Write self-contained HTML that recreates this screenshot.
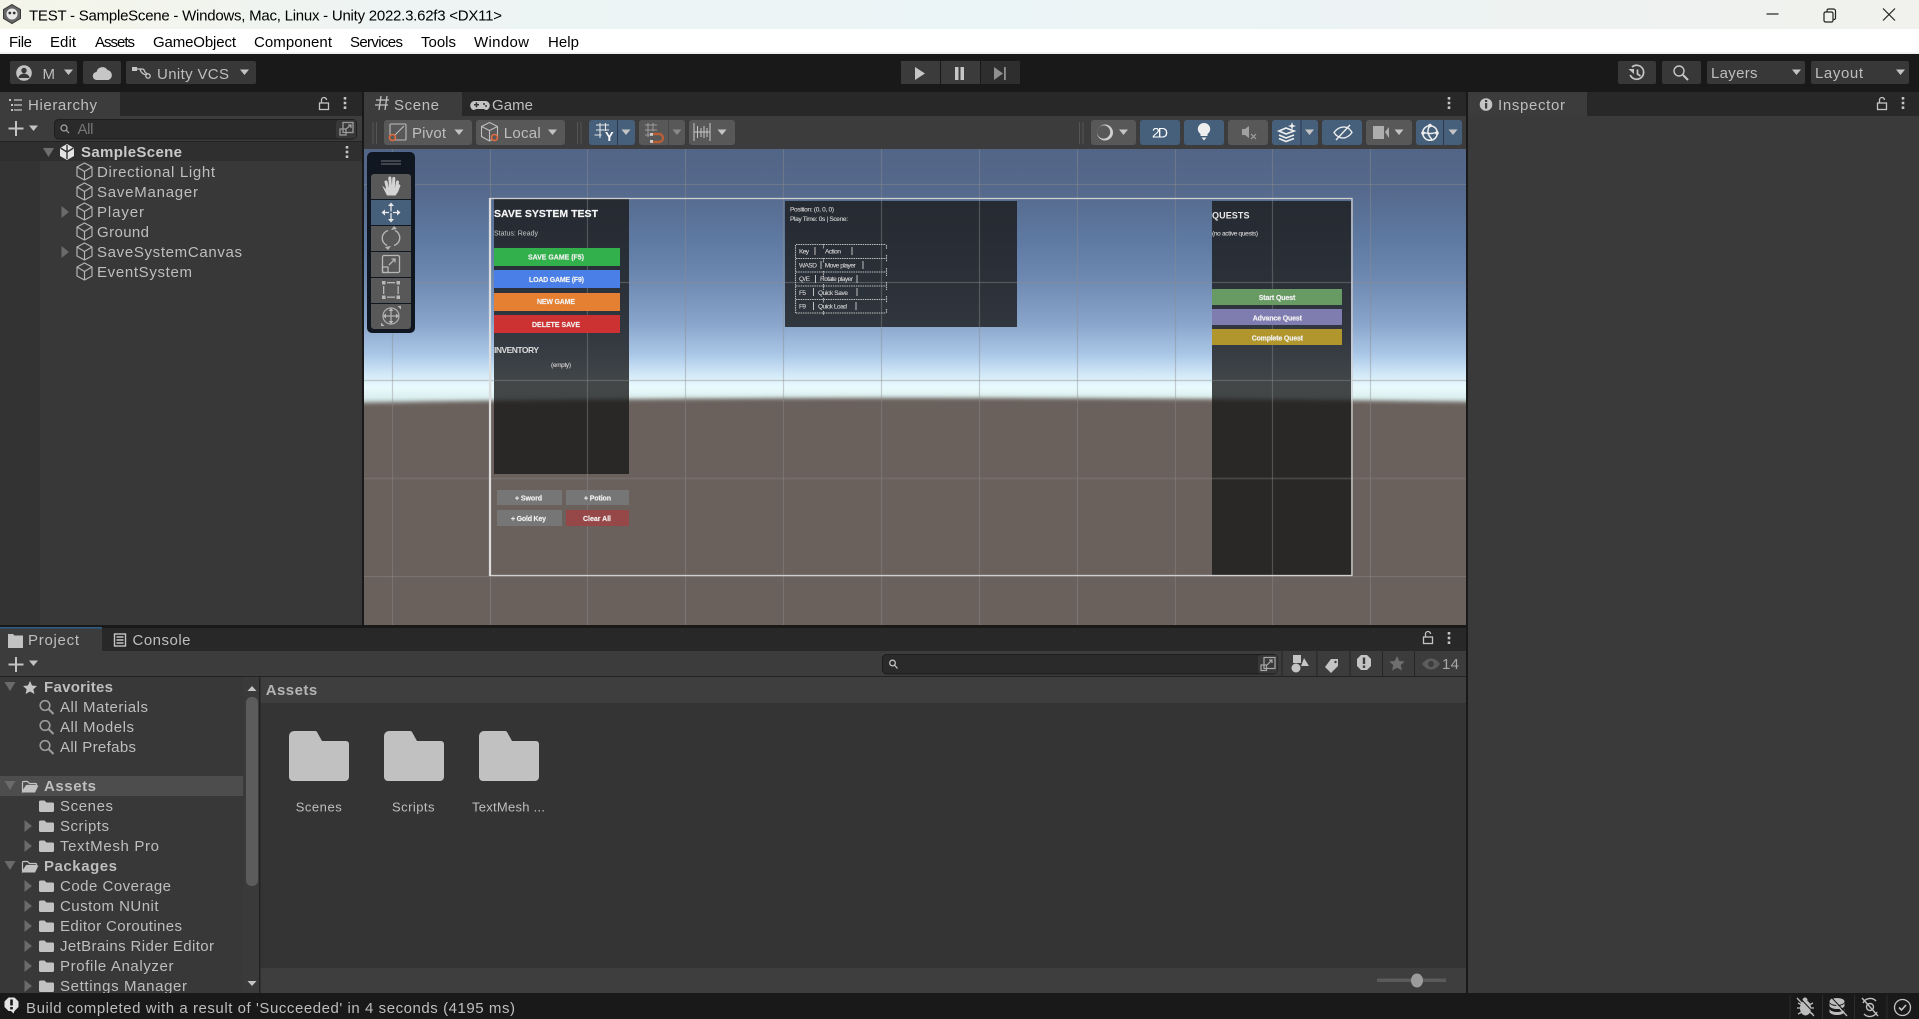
<!DOCTYPE html>
<html lang="en"><head><meta charset="utf-8"><title>TEST - SampleScene - Unity</title>
<style>
html,body{margin:0;padding:0;background:#191919;overflow:hidden;width:1919px;height:1019px}
svg{display:block}
text{font-family:"Liberation Sans",sans-serif;font-size:15px;white-space:pre}
text:not([fill]){fill:#bebebe}
text.b{font-weight:bold}
text.k{fill:#000}
text.u{fill:#fff}
text.c{fill:#f2f2f2;font-weight:bold;font-size:7px;stroke:#f2f2f2;stroke-width:.15px}
text.s{fill:#d4d4d4;font-size:6.500px;stroke:#d4d4d4;stroke-width:.1px}
</style></head><body>
<svg width="1919" height="1019" viewBox="0 0 1919 1019" xmlns="http://www.w3.org/2000/svg">
<defs>
<linearGradient id="tb" x1="0" x2="1" y1="0" y2="0"><stop offset="0" stop-color="#f5f5e9"/><stop offset=".2" stop-color="#eef4f3"/><stop offset=".5" stop-color="#ebf4f7"/><stop offset=".75" stop-color="#edf3f3"/><stop offset="1" stop-color="#f1f2ed"/></linearGradient>
<linearGradient id="sky" gradientUnits="userSpaceOnUse" x1="0" x2="0" y1="149" y2="405"><stop offset="0" stop-color="#526587"/><stop offset=".16" stop-color="#55698c"/><stop offset=".36" stop-color="#5f7aa2"/><stop offset=".5" stop-color="#6d88b0"/><stop offset=".68" stop-color="#89a4ca"/><stop offset=".8" stop-color="#aac6e6"/><stop offset=".87" stop-color="#cde4f6"/><stop offset=".93" stop-color="#eafbfd"/><stop offset=".97" stop-color="#dcefef"/><stop offset="1" stop-color="#b8c6c6"/></linearGradient>
<filter id="bl" x="-5%" y="-5%" width="110%" height="110%"><feGaussianBlur stdDeviation="2"/></filter>
<filter id="tx" x="-5%" y="-5%" width="110%" height="110%"><feGaussianBlur stdDeviation=".3"/></filter>
<clipPath id="pc"><rect x="0" y="677" width="243" height="316"/></clipPath>
<clipPath id="sc"><rect x="364" y="149" width="1102" height="476"/></clipPath>
<g id="dn"><path d="M-4.500-2.500h9L0 3z"/></g>
<g id="rt"><path d="M-3.500-6L4 0l-7.500 6z" fill="#6a6a6a"/></g>
<g id="tdn"><path d="M-5.500-5h11L0 4z" fill="#6a6a6a"/></g>
<g id="cube" fill="none" stroke="#b4b4b4" stroke-width="1.200" stroke-linejoin="round"><path d="M0-8.500L7.500-4.500v9L0 8.500l-7.500-4v-9z"/><path d="M-7.500-4.500L0 0l7.500-4.500M0 0v8.500"/></g>
<path id="fo" d="M0 2a1.500 1.500 0 0 1 1.500-1.500h4l2 2H13.500a1.500 1.500 0 0 1 1.500 1.500v6.500a1.500 1.500 0 0 1-1.500 1.500H1.500a1.500 1.500 0 0 1-1.500-1.500z" fill="#c2c2c2"/>
<g id="fopen"><path d="M0 2a1 1 0 0 1 1-1h4l2 2h6a1 1 0 0 1 1 1v1H4L0 11z" fill="none" stroke="#c2c2c2" stroke-width="1.200"/><path d="M3.500 5H16L12.500 12H0z" fill="#c2c2c2"/></g>
<path id="bf" d="M0 5a5 5 0 0 1 5-5h21a2 2 0 0 1 2 1l5 9h24a3 3 0 0 1 3 3v33a4 4 0 0 1-4 4H4a4 4 0 0 1-4-4z" fill="#c1c1c1"/>
<g id="mag" fill="none" stroke="#9b9b9b" stroke-width="1.600"><circle cx="5.500" cy="5.500" r="4.800"/><path d="M9 9l5 5" stroke-width="2"/></g>
<g id="lock" fill="none" stroke="#c4c4c4" stroke-width="1.300"><rect x="-4.500" y="-1" width="9" height="6.500"/><path d="M-2.500-1v-3a2.500 2.500 0 0 1 5 0"/></g>
<g id="dots" fill="#c4c4c4"><rect x="-1.300" y="-6" width="2.600" height="2.600"/><rect x="-1.300" y="-1.300" width="2.600" height="2.600"/><rect x="-1.300" y="3.400" width="2.600" height="2.600"/></g>
</defs>

<!-- title bar -->
<rect width="1919" height="29" fill="url(#tb)"/>
<rect y="29" width="1919" height="25" fill="#fff"/>
<rect y="52.500" width="1919" height="1.500" fill="#eee"/>
<path d="M12 4.500l8.500 5v9L12 23.500l-8.500-5v-9z" fill="#666" stroke="#3a3a3a"/><circle cx="12" cy="14" r="5.500" fill="#e8e8e8"/><circle cx="9.800" cy="13" r="1.400" fill="#333"/><circle cx="14.200" cy="13" r="1.400" fill="#333"/>
<text x="29" y="20.500" class="k" textLength="473">TEST - SampleScene - Windows, Mac, Linux - Unity 2022.3.62f3 &lt;DX11&gt;</text>
<g stroke="#222" stroke-width="1.200" fill="none"><path d="M1766.500 14h12"/><rect x="1824" y="12" width="9" height="10" rx="1.500"/><path d="M1827 12v-1.500a1.500 1.500 0 0 1 1.500-1.500h5a2 2 0 0 1 2 2v7a1.500 1.500 0 0 1-1.500 1.500H1833"/><path d="M1883 8.500l12 12M1895 8.500l-12 12"/></g>
<text x="9" y="47" class="k" textLength="23">File</text>
<text x="50" y="47" class="k" textLength="26">Edit</text>
<text x="95" y="47" class="k" textLength="40">Assets</text>
<text x="153" y="47" class="k" textLength="83">GameObject</text>
<text x="254" y="47" class="k" textLength="78">Component</text>
<text x="350" y="47" class="k" textLength="53">Services</text>
<text x="421" y="47" class="k" textLength="35">Tools</text>
<text x="474" y="47" class="k" textLength="55">Window</text>
<text x="548" y="47" class="k" textLength="31">Help</text>

<!-- main toolbar -->
<g fill="#383838">
<rect x="10" y="61" width="67" height="23" rx="2"/><rect x="83" y="61" width="38" height="23" rx="2"/><rect x="126" y="61" width="130" height="23" rx="2"/>
<rect x="1618" y="61" width="38" height="23" rx="2"/><rect x="1662" y="61" width="39" height="23" rx="2"/><rect x="1707" y="61" width="98" height="23" rx="2"/><rect x="1811" y="61" width="98" height="23" rx="2"/>
</g>
<circle cx="24" cy="73" r="7.800" fill="#c4c4c4"/><circle cx="24" cy="70.500" r="2.700" fill="#383838"/><path d="M18.500 78a5.500 4.500 0 0 1 11 0z" fill="#383838"/>
<text x="42.500" y="79" textLength="12">M</text>
<use href="#dn" x="68.500" y="72" fill="#c4c4c4"/>
<path d="M97 80a4 4 0 0 1-.500-8 6 6 0 0 1 11-2 5.200 5.200 0 0 1 1 10z" fill="#c6c6c6"/>
<g fill="none" stroke="#c4c4c4" stroke-width="1.300"><path d="M136 69h6c2 0 2 1 3 3l2 2"/><path d="M140 69c1 4 3 5 6 6"/><circle cx="148" cy="76" r="2.200"/></g><path d="M132 67h5v4h-5z" fill="#c4c4c4"/>
<text x="157" y="79" textLength="72">Unity VCS</text>
<use href="#dn" x="244.500" y="72" fill="#c4c4c4"/>
<rect x="901" y="61" width="40" height="23" fill="#3b3b3b"/><rect x="941" y="61" width="39" height="23" fill="#3b3b3b"/><rect x="981" y="61" width="39" height="23" fill="#2e2e2e"/><rect x="940" y="61" width="1" height="23" fill="#191919"/><rect x="980" y="61" width="1" height="23" fill="#191919"/>
<path d="M915 67l10 6.500-10 6.500z" fill="#c6c6c6"/>
<rect x="955" y="67" width="3.500" height="13" fill="#c6c6c6"/><rect x="960.500" y="67" width="3.500" height="13" fill="#c6c6c6"/>
<path d="M994 67l9 6.500-9 6.500z" fill="#8f8f8f"/><rect x="1004" y="67" width="1.800" height="13" fill="#8f8f8f"/>
<g fill="none" stroke="#c6c6c6" stroke-width="1.700"><path d="M1632 67a7 7 0 1 1-1.800 8"/><path d="M1637.500 69.500v4.500l3 2"/></g><path d="M1628.500 69h5.500v5z" fill="#c6c6c6"/>
<g fill="none" stroke="#c6c6c6" stroke-width="1.400"><circle cx="1679" cy="71" r="5"/><path d="M1683 75l5 5" stroke-width="2"/></g>
<text x="1711" y="78" textLength="46.500">Layers</text><use href="#dn" x="1796.500" y="72" fill="#c4c4c4"/>
<text x="1815" y="78" textLength="48">Layout</text><use href="#dn" x="1900.500" y="72" fill="#c4c4c4"/>

<!-- hierarchy -->
<rect x="0" y="92" width="362" height="533" fill="#383838"/>
<rect x="0" y="92" width="362" height="24" fill="#282828"/>
<rect x="0" y="92" width="120" height="24" fill="#3c3c3c"/>
<g fill="none" stroke="#c4c4c4" stroke-width="1.200"><path d="M14 100h8M14 105h8M14 110h8"/></g><g fill="#c4c4c4"><rect x="9" y="99" width="2" height="2"/><rect x="11" y="104" width="2" height="2"/><rect x="11" y="109" width="2" height="2"/></g>
<text x="28" y="110" textLength="69">Hierarchy</text>
<use href="#lock" x="324" y="104"/>
<use href="#dots" x="345" y="103"/>
<rect x="0" y="116" width="362" height="25" fill="#3c3c3c"/><rect x="0" y="141" width="362" height="1" fill="#232323"/>
<path d="M16 121v15M8.500 128.500h15" stroke="#c4c4c4" stroke-width="2" fill="none"/>
<use href="#dn" x="33.500" y="128" fill="#c4c4c4"/>
<rect x="54.500" y="119.500" width="302" height="19.500" rx="4" fill="#2a2a2a" stroke="#1e1e1e"/>
<rect x="336" y="120" width="20" height="18.500" rx="3" fill="#383838"/>
<g fill="none" stroke="#9a9a9a" stroke-width="1.300"><rect x="343" y="122.500" width="10" height="10"/><rect x="340" y="129" width="6" height="6"/><path d="M346 129l5-4M348 125h3v3"/></g>
<g fill="none" stroke="#aaa" stroke-width="1.200"><circle cx="64" cy="128" r="3"/><path d="M66 130l3 3"/></g><text x="77.500" y="134" textLength="16" fill="#777">All</text>
<rect x="0" y="142" width="362" height="19" fill="#2f2f2f"/>
<rect x="0" y="161" width="40" height="464" fill="#333"/>
<path d="M43 148h11l-5.500 9z" fill="#6e6e6e"/>
<path d="M67 144l7 4v8l-7 4-7-4v-8z" fill="#e4e4e4"/><path d="M67 145v6M60.500 148l6.500 4 6.500-4M67 152v7" stroke="#333" stroke-width="1.400" fill="none"/>
<text x="81" y="157" class="b" textLength="101" fill="#c9c9c9">SampleScene</text>
<use href="#dots" x="347" y="152"/>
<use href="#cube" x="84.500" y="171.500"/><text x="97" y="177" textLength="118">Directional Light</text>
<use href="#cube" x="84.500" y="191.500"/><text x="97" y="197" textLength="101">SaveManager</text>
<use href="#rt" x="65" y="212"/><use href="#cube" x="84.500" y="211.500"/><text x="97" y="217" textLength="47">Player</text>
<use href="#cube" x="84.500" y="231.500"/><text x="97" y="237" textLength="52">Ground</text>
<use href="#rt" x="65" y="252"/><use href="#cube" x="84.500" y="251.500"/><text x="97" y="257" textLength="145">SaveSystemCanvas</text>
<use href="#cube" x="84.500" y="271.500"/><text x="97" y="277" textLength="95">EventSystem</text>

<!-- scene -->
<rect x="364" y="92" width="1102" height="24" fill="#282828"/>
<rect x="364" y="92" width="98" height="24" fill="#3c3c3c"/>
<g stroke="#c0c0c0" stroke-width="1.300" fill="none"><path d="M376 100h13M375 105h13M381 96l-2 14M387 96l-2 14"/></g>
<text x="394" y="110" textLength="45">Scene</text>
<path d="M475 101h10a4.500 4.500 0 0 1 4 7 3 3 0 0 1-5 1h-8a3 3 0 0 1-5-1 4.500 4.500 0 0 1 4-7z" fill="#c4c4c4"/><g fill="#333"><rect x="474" y="104" width="5" height="1.500"/><rect x="475.700" y="102.300" width="1.500" height="5"/><circle cx="484" cy="104" r="1"/><circle cx="486" cy="106" r="1"/></g>
<text x="492" y="110" textLength="41">Game</text>
<use href="#dots" x="1449" y="103"/>
<rect x="364" y="116" width="1102" height="33" fill="#3c3c3c"/>
<g fill="#555"><rect x="372.500" y="122" width="1" height="22"/><rect x="376" y="122" width="1" height="22"/><rect x="577" y="122" width="1" height="22"/><rect x="580.500" y="122" width="1" height="22"/><rect x="1079" y="122" width="1" height="22"/><rect x="1082.500" y="122" width="1" height="22"/></g>
<g fill="#585858">
<rect x="384" y="120" width="88" height="25" rx="3"/><rect x="476" y="120" width="89" height="25" rx="3"/>
<rect x="639" y="120" width="46" height="25" rx="3"/><rect x="689" y="120" width="46" height="25" rx="3"/>
<rect x="1091" y="120" width="45" height="25" rx="3"/><rect x="1228" y="120" width="40" height="25" rx="3"/><rect x="1366" y="120" width="46" height="25" rx="3"/>
</g>
<g fill="#46607c">
<rect x="589" y="120" width="46" height="25" rx="3"/><rect x="1140" y="120" width="40" height="25" rx="3"/><rect x="1184" y="120" width="40" height="25" rx="3"/><rect x="1272" y="120" width="46" height="25" rx="3"/><rect x="1322" y="120" width="40" height="25" rx="3"/><rect x="1416" y="120" width="46" height="25" rx="3"/>
</g>
<g fill="#2a3a4e"><rect x="617" y="120" width="1" height="25"/><rect x="1300.500" y="120" width="1" height="25"/><rect x="1443" y="120" width="1" height="25"/></g><rect x="668" y="120" width="1" height="25" fill="#484848"/>
<!-- pivot -->
<g fill="none" stroke="#bdbdbd" stroke-width="1.100"><rect x="390" y="124" width="16" height="16" rx="1"/><path d="M393 137l11-11"/></g><circle cx="392.500" cy="137.500" r="3" fill="#585858" stroke="#e06a3c" stroke-width="1.600"/>
<text x="412" y="138" textLength="34">Pivot</text><use href="#dn" x="459" y="132" fill="#c4c4c4"/>
<g fill="none" stroke="#bdbdbd" stroke-width="1.100"><path d="M489.500 122.500l8 4v10l-8 4.500-8-4.500v-10zM481.500 126.500l8 4 8-4M489.500 130.500v10"/></g><circle cx="494.500" cy="137.500" r="3" fill="#585858" stroke="#e06a3c" stroke-width="1.600"/>
<text x="503.700" y="138" textLength="37">Local</text><use href="#dn" x="552.500" y="132" fill="#c4c4c4"/>
<!-- snap -->
<g fill="none" stroke="#e4e4e4" stroke-width="1.100"><path d="M596 125h13M596 130h13M594.500 135h7M600 123v15M605.500 123v8"/></g><text x="605" y="141" class="u b" style="font-size:13px" textLength="9">Y</text>
<use href="#dn" x="626" y="132" fill="#c4c4c4"/>
<g fill="none" stroke="#9d9d9d" stroke-width="1"><path d="M645 125h12M645 130h12M645 135h5M648 123v14M653 123v8"/></g><path d="M651 134h8a4 4 0 0 1 0 8h-8" fill="none" stroke="#b85f38" stroke-width="2.400"/><rect x="650" y="140" width="3" height="2.800" fill="#ccc"/><rect x="650" y="133" width="3" height="2.800" fill="#ccc"/>
<use href="#dn" x="677" y="132" fill="#8a8a8a"/>
<g fill="none" stroke="#c8c8c8" stroke-width="1"><path d="M694 123v18M710 123v18M694 132h16M697.500 126v12M701 128v9M704 126v12M707 128v9"/></g><use href="#dn" x="722" y="132" fill="#c4c4c4"/>
<!-- shading / 2D / light etc -->
<circle cx="1105" cy="132.500" r="8" fill="#cfcfcf"/><circle cx="1103.600" cy="132" r="6.600" fill="#585858"/>
<use href="#dn" x="1123.500" y="132" fill="#c4c4c4"/>
<text x="1152" y="137.500" class="u" style="font-size:14px" textLength="16">2D</text>
<path d="M1204 123a6 6 0 0 1 3.500 11v2h-7v-2a6 6 0 0 1 3.500-11z" fill="#eee"/><path d="M1201.500 137.500h5l-2.500 3z" fill="#eee"/>
<path d="M1242 129h3l4-3v12l-4-3h-3z" fill="#a0a0a0"/><path d="M1251 134l5 5M1256 134l-5 5" stroke="#a0a0a0" stroke-width="1.200"/>
<path d="M1279 131l7-3 8 3-8 3zM1279 135l7 3 8-3M1279 138.500l7 3 8-3" fill="none" stroke="#eee" stroke-width="1.700"/><path d="M1292 122l1 3 3 1-3 1-1 3-1-3-3-1 3-1z" fill="#eee"/>
<use href="#dn" x="1309.500" y="132" fill="#c4c4c4"/>
<path d="M1334 132.500c3-4 7-5.500 10-5.500s6 2 8 5.500c-3 4-6 5.500-9 5.500s-7-2-9-5.500z" fill="none" stroke="#eee" stroke-width="1.300"/><path d="M1336 140l14-15" stroke="#eee" stroke-width="1.400"/>
<rect x="1373" y="126" width="11" height="13" fill="#adadad"/><path d="M1385 132l4-5v11z" fill="#adadad"/>
<use href="#dn" x="1399" y="132" fill="#c4c4c4"/>
<g fill="none" stroke="#eee" stroke-width="1.500"><circle cx="1430" cy="133" r="7.300"/><path d="M1423 132c4 2 10 2 14 0M1430 125.500c-3 4-3 9 2 14"/></g><circle cx="1430" cy="125.500" r="1.800" fill="#eee"/><circle cx="1437" cy="133" r="1.800" fill="#eee"/><circle cx="1423" cy="133" r="1.800" fill="#eee"/>
<use href="#dn" x="1453" y="132" fill="#c4c4c4"/>

<!-- scene view -->
<g clip-path="url(#sc)">
<rect x="364" y="149" width="1102" height="476" fill="url(#sky)"/>
<path d="M340 403.500Q880 393 1490 402.500V640H340z" fill="#6a615b" filter="url(#bl)"/>
<g fill="#1a1a1a" fill-opacity=".8"><rect x="494" y="198.500" width="135" height="275.500"/><rect x="785" y="201" width="232" height="126"/><rect x="1212" y="201" width="139" height="374"/></g>
<g stroke="#8c8c8c" stroke-opacity=".42" stroke-width="1.200" fill="none">
<path d="M392.500 149V627M490.500 149V627M587.500 149V627M685.500 149V627M783.500 149V627M881.500 149V627M979.500 149V627M1077.500 149V627M1175.500 149V627M1272.500 149V627M1370.500 149V627"/>
<path d="M364 184.500H1466M364 282.500H1466M364 380.500H1466M364 576.500H1466"/>
<path d="M364 478.500H1466" stroke-width="1.700" stroke-opacity=".3"/>
</g>
<rect x="490" y="198.500" width="862" height="377" fill="none" stroke="#cfcfcf" stroke-width="1.300"/>
<path d="M490 198v378" stroke="#dcdcdc" stroke-width="2.200"/>
<g filter="url(#tx)">
<rect x="494" y="248" width="126" height="18" fill="#31b04c"/>
<rect x="494" y="270" width="126" height="18" fill="#4a7fe6"/>
<rect x="494" y="293" width="126" height="18" fill="#e58032"/>
<rect x="494" y="315" width="126" height="18" fill="#cc3232"/>
<rect x="497" y="490" width="65" height="15" fill="#767676"/><rect x="566" y="490" width="63" height="15" fill="#767676"/>
<rect x="497" y="510" width="65" height="16" fill="#767676"/><rect x="566" y="510" width="63" height="16" fill="#964646"/>
<rect x="1212" y="289" width="130" height="16" fill="#689a64"/>
<rect x="1212" y="309" width="130" height="16" fill="#7f7cb0"/>
<rect x="1212" y="329" width="130" height="16" fill="#b1962f"/>
<text x="494" y="217" class="b" style="font-size:10.500px;stroke:#f5f5f5;stroke-width:.2px" fill="#f5f5f5" textLength="104">SAVE SYSTEM TEST</text>
<text x="494" y="235.500" style="font-size:7px" fill="#c8c8c8" textLength="44">Status: Ready</text>
<text x="528" y="259.500" class="c" textLength="56">SAVE GAME (F5)</text>
<text x="529" y="282" class="c" textLength="55">LOAD GAME (F9)</text>
<text x="537" y="304" class="c" textLength="38">NEW GAME</text>
<text x="532" y="327" class="c" textLength="48">DELETE SAVE</text>
<text x="494" y="353" class="b" style="font-size:8.500px" fill="#dcdcdc" textLength="45">INVENTORY</text>
<text x="551" y="367" class="s" textLength="20">(empty)</text>
<text x="515" y="500.500" class="c" textLength="27">+ Sword</text>
<text x="584" y="500.500" class="c" textLength="27">+ Potion</text>
<text x="511" y="521" class="c" textLength="35">+ Gold Key</text>
<text x="583" y="521" class="c" textLength="28">Clear All</text>
<text x="790" y="211.500" class="s" textLength="44">Position: (0, 0, 0)</text>
<text x="790" y="221" class="s" textLength="58">Play Time: 0s | Scene:</text>
<g fill="none" stroke="#bcbcbc" stroke-width="1.100" stroke-dasharray="1.500 .8">
<path d="M796 244.500H886M796 258.500H886M796 272H886M796 286H886M796 299.500H886M796 313H886"/>
<path d="M795.500 245V313M886.500 245V249M886.500 255V262M886.500 268V276M886.500 282V290M886.500 296V303M886.500 309V313"/>
<path d="M823.500 244V249M823.500 258V263M823.500 271V277M823.500 284V290M823.500 298V303M823.500 311V315"/>
</g>
<g stroke="#cfcfcf" stroke-width=".9" fill="none"><path d="M815 247v8M852 247v8M821 261v8M863 261v8M815.500 275v8M857 275v8M813.500 288v8M857 288v8M813.500 302v8M856 302v8"/></g>
<text x="799" y="253.500" class="s" textLength="10">Key</text><text x="825" y="253.500" class="s" textLength="16">Action</text>
<text x="799" y="267.500" class="s" textLength="18">WASD</text><text x="824.700" y="267.500" class="s" textLength="31">Move player</text>
<text x="799" y="281" class="s" textLength="11">Q/E</text><text x="820" y="281" class="s" textLength="33">Rotate player</text>
<text x="799" y="295" class="s" textLength="7">F5</text><text x="818" y="295" class="s" textLength="30">Quick Save</text>
<text x="799" y="308.500" class="s" textLength="7">F9</text><text x="818" y="308.500" class="s" textLength="29">Quick Load</text>
<text x="1212" y="218.300" class="b" style="font-size:9px" fill="#e8e8e8" textLength="37.500">QUESTS</text>
<text x="1212" y="235.700" class="s" textLength="46">(no active quests)</text>
<text x="1258.700" y="300" class="c" textLength="36.700">Start Quest</text>
<text x="1252.700" y="320.500" class="c" textLength="49.300">Advance Quest</text>
<text x="1251.700" y="340.300" class="c" textLength="51.300">Complete Quest</text>
</g>
<!-- gizmo toolbar -->
<rect x="367" y="152" width="48" height="181" rx="5" fill="#111721"/>
<path d="M381 161h20M381 164h20" stroke="#5c6068" stroke-width="1.300"/>
<path d="M371 177a3 3 0 0 1 3-3h34a3 3 0 0 1 3 3v22h-40z" fill="#585858"/>
<rect x="371" y="200" width="40" height="25" fill="#46607c"/>
<rect x="371" y="226" width="40" height="25" fill="#585858"/>
<rect x="371" y="252" width="40" height="25" fill="#585858"/>
<rect x="371" y="278" width="40" height="25" fill="#585858"/>
<path d="M371 304h40v22a3 3 0 0 1-3 3h-34a3 3 0 0 1-3-3z" fill="#585858"/>
<!-- hand -->
<path d="M386 182l2 8M389.800 178l.8 10M393.800 178.500l-.5 10M397.500 182l-1.500 8" stroke="#d4d4d4" stroke-width="3" stroke-linecap="round" fill="none"/>
<path d="M382 185.500l4 3.500 2-2 8.500 1 2.500-4 1.500 1.500-2.500 6.500-2.500 3.500h-8.500z" fill="#d4d4d4"/>
<!-- move -->
<g stroke="#e8e8e8" stroke-width="1.300" fill="none"><path d="M391 204.500v7M391 213v7M382 212.500h7M393 212.500h7"/></g><g fill="#e8e8e8"><path d="M391 202.500l3 3.500h-6zM391 222.500l3-3.500h-6zM381.500 212.500l3.500-3v6zM400.500 212.500l-3.500-3v6z"/></g>
<!-- rotate -->
<g fill="none" stroke="#b6b6b6" stroke-width="1.400"><path d="M388 230.500a8 8 0 0 0 -1 15M394 245.500a8 8 0 0 0 1-15"/></g><path d="M385 247l6-1-3 4zM397 229l-6 1 3-4z" fill="#b6b6b6"/>
<!-- scale -->
<g fill="none" stroke="#b6b6b6" stroke-width="1.300"><rect x="382.500" y="255.500" width="17" height="17" rx="1.500"/><rect x="382.500" y="267" width="5.500" height="5.500"/><path d="M389 265l6-6M391.500 259h3.500v3.500"/></g>
<!-- rect -->
<g fill="#b8b8b8"><rect x="382" y="281" width="3.500" height="3.500"/><rect x="396.500" y="281" width="3.500" height="3.500"/><rect x="382" y="295.500" width="3.500" height="3.500"/><rect x="396.500" y="295.500" width="3.500" height="3.500"/><rect x="387" y="282" width="8" height="1.300"/><rect x="387" y="296.500" width="8" height="1.300"/><rect x="383" y="286" width="1.300" height="8"/><rect x="397.500" y="286" width="1.300" height="8"/></g>
<!-- transform -->
<circle cx="391" cy="316" r="8" fill="none" stroke="#b0b0b0" stroke-width="1.200"/><g stroke="#b0b0b0" stroke-width="1.300" fill="none"><path d="M391 310v12M385 316h12"/></g><g fill="#b8b8b8"><path d="M391 308l2.500 3h-5zM391 324l2.500-3h-5zM383 316l3-2.500v5zM399 316l-3-2.500v5zM381 326v-3.500l3.500 3.500zM401 306v3.500l-3.500-3.500z"/></g>
</g>

<!-- inspector -->
<rect x="1468" y="92" width="451" height="901" fill="#3a3a3a"/>
<rect x="1468" y="92" width="451" height="24" fill="#282828"/>
<rect x="1468" y="92" width="119" height="24" fill="#3c3c3c"/>
<circle cx="1486" cy="104.500" r="6.300" fill="#c4c4c4"/><rect x="1485" y="103" width="2.200" height="5.500" fill="#3c3c3c"/><rect x="1485" y="100" width="2.200" height="2" fill="#3c3c3c"/>
<text x="1498" y="110" textLength="67">Inspector</text>
<use href="#lock" x="1882" y="104"/>
<use href="#dots" x="1903" y="103"/>

<!-- project -->
<rect x="0" y="628" width="1466" height="365" fill="#343434"/>
<rect x="0" y="628" width="1466" height="23" fill="#282828"/>
<rect x="0" y="628" width="102" height="23" fill="#3c3c3c"/>
<rect x="0" y="627" width="102" height="1.500" fill="#2c5d87"/>
<path d="M8 634h5l1.500 1.500H23V648H8z" fill="#c2c2c2"/>
<text x="28" y="645" textLength="51">Project</text>
<g fill="none" stroke="#c4c4c4" stroke-width="1.400"><rect x="114.500" y="634" width="11" height="12"/><path d="M116.500 637h7M116.500 640h7M116.500 643h7"/></g>
<text x="132.500" y="645" textLength="58">Console</text>
<use href="#lock" x="1428" y="638"/>
<use href="#dots" x="1449" y="638"/>
<rect x="0" y="651" width="1466" height="25" fill="#3c3c3c"/><rect x="0" y="676" width="1466" height="1" fill="#232323"/>
<path d="M16 657v15M8.500 664.500h15" stroke="#c4c4c4" stroke-width="2" fill="none"/>
<use href="#dn" x="33.500" y="663" fill="#c4c4c4"/>
<rect x="882.500" y="654.500" width="395" height="19.500" rx="4" fill="#2a2a2a" stroke="#1c1c1c"/>
<rect x="1258" y="655" width="19.500" height="18.500" rx="3" fill="#383838"/>
<g fill="none" stroke="#a8a8a8" stroke-width="1.200"><rect x="1264" y="657.500" width="11" height="11"/><rect x="1261" y="665" width="5.500" height="5.500"/><path d="M1267 665l5-5M1269 660h3v3"/></g>
<g fill="none" stroke="#c0c0c0" stroke-width="1.300"><circle cx="892.500" cy="663" r="2.800"/><path d="M894.500 665l3 3.500"/></g>
<g fill="#252525"><rect x="1281.500" y="651" width="1" height="25"/><rect x="1316.500" y="651" width="1" height="25"/><rect x="1349.500" y="651" width="1" height="25"/><rect x="1382" y="651" width="1" height="25"/><rect x="1414" y="651" width="1" height="25"/></g>
<rect x="1293" y="655" width="8" height="8" fill="#c4c4c4"/><circle cx="1296" cy="668" r="4.500" fill="#c4c4c4"/><path d="M1304 658l5 8h-8z" fill="#c4c4c4"/>
<path d="M1331 659h7v7l-7 7-6-6z" fill="#c4c4c4"/><circle cx="1335.500" cy="662" r="1.200" fill="#3c3c3c"/>
<path d="M1361 655h6l4 4v7l-4 4h-6l-4-4v-7z" fill="#c4c4c4"/><rect x="1362.800" y="657.500" width="2.400" height="6.500" fill="#3c3c3c"/><rect x="1362.800" y="665.500" width="2.400" height="2.400" fill="#3c3c3c"/>
<path d="M1397 656l2.300 5 5.400.500-4 3.600 1.200 5.400-4.900-2.800-4.900 2.800 1.200-5.400-4-3.600 5.400-.500z" fill="#6f6f6f"/>
<path d="M1422 664c3-4 6-5.500 9-5.500s6 1.500 9 5.500c-3 4-6 5.500-9 5.500s-6-1.500-9-5.500z" fill="#5c5c5c"/><circle cx="1431" cy="664" r="3.500" fill="#3c3c3c" stroke="#5c5c5c"/>
<text x="1442" y="669" textLength="17" fill="#a8a8a8">14</text>

<rect x="0" y="677" width="243" height="316" fill="#383838"/>
<rect x="243" y="677" width="16" height="316" fill="#3a3a3a"/>
<rect x="246" y="697" width="12" height="189" rx="5.500" fill="#5c5c5c"/>
<path d="M247.500 691h9l-4.500-5z" fill="#c4c4c4"/><path d="M247.500 981h9l-4.500 5z" fill="#c4c4c4"/>
<rect x="259" y="677" width="1.500" height="316" fill="#232323"/>
<rect x="260.500" y="677" width="1205.500" height="26" fill="#3e3e3e"/>
<rect x="260.500" y="968" width="1205.500" height="25" fill="#3e3e3e"/>
<text x="265.700" y="695" class="b" textLength="51.500" fill="#b4b4b4">Assets</text>
<use href="#bf" x="289" y="731"/><use href="#bf" x="384" y="731"/><use href="#bf" x="479" y="731"/>
<text x="295.700" y="811.500" style="font-size:13px" textLength="46">Scenes</text>
<text x="392" y="811.500" style="font-size:13px" textLength="42.500">Scripts</text>
<text x="472" y="811.500" style="font-size:13px" textLength="73">TextMesh ...</text>
<rect x="1377" y="978.500" width="69" height="3.500" fill="#5b5b5b"/>
<ellipse cx="1417" cy="980.500" rx="6" ry="7" fill="#9c9c9c"/>

<g clip-path="url(#pc)">
<rect x="0" y="776" width="243" height="20" fill="#4d4d4d"/>
<use href="#tdn" x="10" y="687"/>
<path d="M30 681l2.100 4.500 4.900.500-3.600 3.200 1 4.800-4.400-2.500-4.400 2.500 1-4.800-3.600-3.200 4.900-.500z" fill="#c4c4c4"/>
<text x="44" y="692" class="b" textLength="69">Favorites</text>
<use href="#mag" x="39.500" y="700"/><text x="60" y="712" textLength="88">All Materials</text>
<use href="#mag" x="39.500" y="720"/><text x="60" y="732" textLength="74">All Models</text>
<use href="#mag" x="39.500" y="740"/><text x="60" y="752" textLength="76">All Prefabs</text>
<use href="#tdn" x="10" y="786"/>
<use href="#fopen" x="22.500" y="780.500"/>
<text x="44" y="791" class="b" textLength="52">Assets</text>
<use href="#fo" x="39" y="800"/><text x="60" y="811" textLength="53">Scenes</text>
<use href="#rt" x="28" y="826"/><use href="#fo" x="39" y="820"/><text x="60" y="831" textLength="49">Scripts</text>
<use href="#rt" x="28" y="846"/><use href="#fo" x="39" y="840"/><text x="60" y="851" textLength="99">TextMesh Pro</text>
<use href="#tdn" x="10" y="866"/>
<use href="#fopen" x="22.500" y="860.500"/>
<text x="44" y="871" class="b" textLength="73">Packages</text>
<use href="#rt" x="28" y="886"/><use href="#fo" x="39" y="880"/><text x="60" y="891" textLength="111">Code Coverage</text>
<use href="#rt" x="28" y="906"/><use href="#fo" x="39" y="900"/><text x="60" y="911" textLength="98.500">Custom NUnit</text>
<use href="#rt" x="28" y="926"/><use href="#fo" x="39" y="920"/><text x="60" y="931" textLength="122">Editor Coroutines</text>
<use href="#rt" x="28" y="946"/><use href="#fo" x="39" y="940"/><text x="60" y="951" textLength="154">JetBrains Rider Editor</text>
<use href="#rt" x="28" y="966"/><use href="#fo" x="39" y="960"/><text x="60" y="971" textLength="113.500">Profile Analyzer</text>
<use href="#rt" x="28" y="986"/><use href="#fo" x="39" y="980"/><text x="60" y="991" textLength="127">Settings Manager</text>
</g>

<!-- status bar -->
<rect x="0" y="993" width="1919" height="26" fill="#191919"/>
<path d="M8.500 997.500h6l4 4v5.500l-4 4-1 2.500-2.500-2.500h-2.500l-4-4v-5.500z" fill="#e4e4e4"/><rect x="10.200" y="999.500" width="2.600" height="6" fill="#191919"/><rect x="10.200" y="1007" width="2.600" height="2.400" fill="#191919"/>
<text x="26" y="1013" textLength="489">Build completed with a result of 'Succeeded' in 4 seconds (4195 ms)</text>
<g fill="#2c2c2c"><rect x="1789.500" y="995" width="1" height="24"/><rect x="1822" y="995" width="1" height="24"/><rect x="1854" y="995" width="1" height="24"/><rect x="1886.500" y="995" width="1" height="24"/></g>
<g><ellipse cx="1805.500" cy="1008" rx="5.500" ry="7.500" fill="#bdbdbd"/><circle cx="1805" cy="1000" r="2.500" fill="#bdbdbd"/><path d="M1798 1003l4 2M1813 1003l-4 2M1797 1008h4M1814 1008h-4M1798 1014l4-2M1813 1014l-4-2M1797 998l17 18" stroke="#bdbdbd" stroke-width="1.300" fill="none"/><path d="M1799 997l17 18" stroke="#191919" stroke-width="1"/></g>
<g><ellipse cx="1837" cy="1001.500" rx="7.500" ry="3.500" fill="#bdbdbd"/><path d="M1829.500 1003c2 4 13 4 15 0v3c-2 4-13 4-15 0zM1829.500 1009c2 4 13 4 15 0v3c-2 4-13 4-15 0z" fill="#bdbdbd"/><path d="M1831 999l16 17" stroke="#bdbdbd" stroke-width="1.300"/><path d="M1832 998l16 17" stroke="#191919" stroke-width="1"/></g>
<g fill="none" stroke="#bdbdbd" stroke-width="1.400"><path d="M1863 1003a8 8 0 0 1 13-2M1877 1012a8 8 0 0 1-13 2"/><circle cx="1870" cy="1007" r="3.500"/><path d="M1862 998l16 18"/></g>
<circle cx="1902.500" cy="1007.500" r="8" fill="none" stroke="#c4c4c4" stroke-width="1.300"/><path d="M1899 1007.500l2.500 2.500 4.500-5" fill="none" stroke="#c4c4c4" stroke-width="1.600"/>
</svg>
</body></html>
